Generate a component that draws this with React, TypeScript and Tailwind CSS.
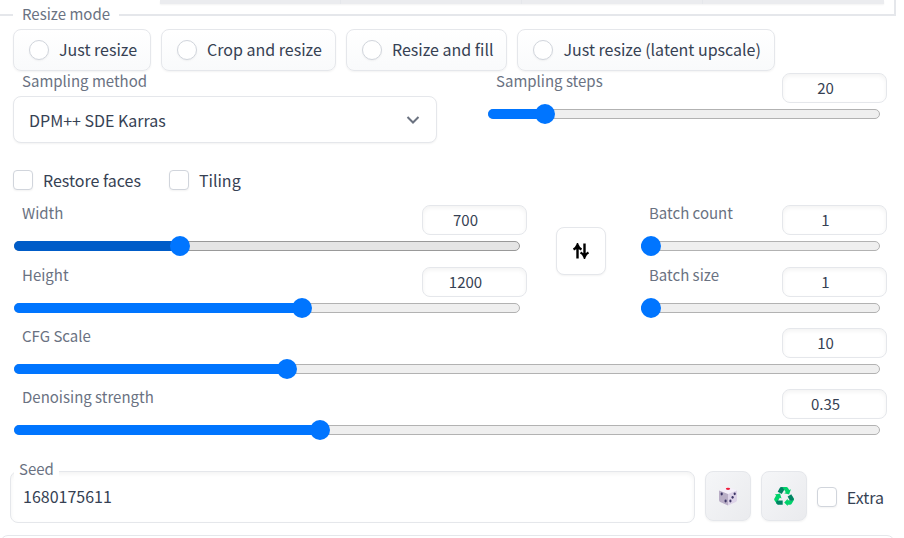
import { useId, useState } from "react";

type SliderProps = {
  label: string;
  min: number;
  max: number;
  step?: number;
  initial: number;
  active?: boolean;
};

function Slider({ label, min, max, step = 1, initial, active = false }: SliderProps) {
  const id = useId();
  const [value, setValue] = useState(initial);
  const ratio = (value - min) / (max - min);
  const update = (e: React.ChangeEvent<HTMLInputElement>) => setValue(Number(e.target.value));

  return (
    <div>
      <div className="flex items-start justify-between pl-2 text-[15px]">
        <label htmlFor={id} className="leading-4 text-gray-500">
          {label}
        </label>
        <input
          type="number"
          aria-label={label + " value"}
          min={min}
          max={max}
          step={step}
          value={value}
          onChange={update}
          className="h-[30px] w-[105px] appearance-none rounded-lg border border-gray-200 bg-white pr-[18px] pb-[2px] text-center text-gray-700 shadow-[inset_0_2px_4px_rgba(0,0,0,0.05)] outline-none [-moz-appearance:textfield] [&::-webkit-inner-spin-button]:appearance-none"
        />
      </div>
      <div className="mr-[7px] grid h-[22px] items-center">
        <span
          className={
            active
              ? "col-start-1 row-start-1 h-[10px] rounded-full border border-[#999999] bg-[#e5e5e5]"
              : "col-start-1 row-start-1 h-[10px] rounded-full border border-[#b2b2b2] bg-[#efefef]"
          }
        />
        <span
          className={
            active
              ? "col-start-1 row-start-1 h-[10px] rounded-l-full bg-[#005cc8]"
              : "col-start-1 row-start-1 h-[10px] rounded-l-full bg-[#0075ff]"
          }
          style={{ width: `calc(10px + (100% - 20px) * ${ratio})` }}
        />
        <input
          id={id}
          type="range"
          min={min}
          max={max}
          step={step}
          value={value}
          onChange={update}
          className="col-start-1 row-start-1 h-5 w-full appearance-none bg-transparent [&::-webkit-slider-thumb]:size-5 [&::-webkit-slider-thumb]:appearance-none [&::-webkit-slider-thumb]:rounded-full [&::-webkit-slider-thumb]:bg-[#0075ff]"
        />
      </div>
    </div>
  );
}

function Check({ label }: { label: string }) {
  return (
    <label className="flex items-center gap-[10px] leading-5 text-gray-700">
      <input
        type="checkbox"
        className="size-5 shrink-0 appearance-none rounded border border-gray-300 bg-white shadow-xs checked:bg-[#0075ff]"
      />
      {label}
    </label>
  );
}

function DiceIcon() {
  return (
    <svg viewBox="0 0 20 20" className="size-5" aria-hidden="true">
      <path d="M10 1 19 4.4 10 8 1 4.4Z" fill="#f5f0fa" />
      <path d="M1 4.4 10 8V19.4L2.2 16Q1 15.4 1 14Z" fill="#b9aec6" />
      <path d="M19 4.4 10 8V19.4L17.8 16Q19 15.4 19 14Z" fill="#ddd3e8" />
      <ellipse cx="10" cy="2.8" rx="2.2" ry="1.1" fill="#f01c38" />
      <g fill="#3c3466">
        <ellipse cx="3.7" cy="8" rx="1.1" ry="1.4" />
        <ellipse cx="7.6" cy="15" rx="1.1" ry="1.4" />
        <ellipse cx="16.7" cy="7.8" rx="1.1" ry="1.4" />
        <ellipse cx="14.6" cy="11.3" rx="1.1" ry="1.4" />
        <ellipse cx="12.4" cy="15" rx="1.1" ry="1.4" />
      </g>
    </svg>
  );
}

function RecycleIcon() {
  return (
    <svg viewBox="0 0 20 20" className="size-5" aria-hidden="true">
      <path d="M7.2 1h5.2q1 0 1.6 1l1.2 2 1.7-.8-1.8 5.2-5-1.2 1.7-1L9.7 2.9Z" fill="#00d26a" />
      <path d="M7.2 1q1.4-.1 2.2 1.2l.9 1.5-2.6 4.4-4-2.3L5.6 2.2Q6.2 1 7.2 1Z" fill="#008463" />
      <path d="m.8 8.5 5.2-1 1.5 5-1.7-.8-1.9 3.4 1 3.4q-1.700.2-2.5-1.200L.4 14.300q-.5-1 0-1.900l1.700-2.900Z" fill="#00d26a" />
      <path d="M3 14.4h5.7v4.3H4.5q-1.700 0-2.300-1.800Q2 15 3 14.4Z" fill="#008463" />
      <path d="m18.200 9.800 1.400 2.500q.7 1.200 0 2.300l-1.700 2.900q-.7 1.200-2 1.200h-2.200v1.200L10.200 16.500l3.500-3.700v1.500h5Z" fill="#00d26a" />
      <path d="m17.300 8.300 2.200 3.900q.8 2.300-1.600 2.500l-2.100-.3-2.200-3.900Z" fill="#008463" />
    </svg>
  );
}

const resizeModes = ["Just resize", "Crop and resize", "Resize and fill", "Just resize (latent upscale)"];

export default function App() {
  return (
    <main className="bg-white font-['Noto_Sans_CJK_SC',sans-serif] text-base">
      <div className="mr-2 h-4 border-r-2 border-b-2 border-gray-200">
        <div className="mr-[10px] ml-[160px] grid h-1 grid-cols-4 divide-x divide-gray-200 bg-[#ebecef] shadow-xs">
          <span />
          <span />
          <span />
          <span />
        </div>
      </div>

      <div className="pr-[17px] pl-[13px]">
        <fieldset className="relative -mt-3">
          <legend className="bg-white px-[9px] text-[15px] leading-5 text-gray-500">Resize mode</legend>
          <div className="mt-[5px] flex flex-wrap gap-[10px]">
            {resizeModes.map((mode) => (
              <label
                key={mode}
                className="flex h-[42px] items-center gap-[10px] rounded-lg border border-gray-200 bg-linear-to-b from-white to-gray-50 pr-[13px] pl-[15px] text-gray-700 shadow-xs"
              >
                <input
                  type="radio"
                  name="resize-mode"
                  value={mode}
                  className="size-5 shrink-0 appearance-none rounded-full border border-gray-300 bg-white shadow-xs checked:bg-[#0075ff]"
                />
                <span className="pb-[2px] leading-5">{mode}</span>
              </label>
            ))}
          </div>
        </fieldset>

        <div className="mt-[2px] grid grid-cols-[424fr_399fr] gap-[51px]">
          <div className="flex flex-col">
            <label htmlFor="sampler" className="pl-[9px] text-[15px] leading-4 text-gray-500">
              Sampling method
            </label>
            <div className="mt-[7px] grid items-center">
              <select
                id="sampler"
                className="col-start-1 row-start-1 h-[47px] w-full appearance-none rounded-lg border border-gray-200 bg-white px-[15px] text-gray-700 shadow-xs"
              >
                <option>DPM++ SDE Karras</option>
              </select>
              <svg
                viewBox="0 0 14 8"
                className="pointer-events-none col-start-1 row-start-1 mr-[17px] h-2 w-[14px] justify-self-end"
                fill="none"
                stroke="#6b7280"
                strokeWidth="2"
                aria-hidden="true"
              >
                <path d="m1.500 1 5.500 5.500L12.500 1" />
              </svg>
            </div>
          </div>
          <Slider label="Sampling steps" min={1} max={150} initial={20} />
        </div>

        <div className="mt-[27px] flex gap-7">
          <Check label="Restore faces" />
          <Check label="Tiling" />
        </div>

        <div className="mt-[15px] pl-px">
          <div className="grid grid-cols-[513fr_50px_252fr] items-center gap-[29px]">
            <div className="flex flex-col gap-[10px]">
              <Slider label="Width" min={64} max={2048} initial={700} active />
              <Slider label="Height" min={64} max={2048} initial={1200} />
            </div>
            <button
              type="button"
              aria-label="Switch width and height"
              className="mb-[22px] flex h-12 items-center justify-center rounded-lg border border-gray-200 bg-white shadow-xs"
            >
              <svg viewBox="0 0 18 16" className="h-4 w-[18px]" fill="none" stroke="#000" strokeWidth="2.4" aria-hidden="true">
                <path d="M5.500 15.500V2M1.500 6.500q3-1.500 4-4.500 1 3 4 4.500" />
                <path d="M12.500.5V14M8.500 9.500q3 1.500 4 4.500 1-3 4-4.500" />
              </svg>
            </button>
            <div className="flex flex-col gap-[10px] pl-[6px]">
              <Slider label="Batch count" min={1} max={100} initial={1} />
              <Slider label="Batch size" min={1} max={8} initial={1} />
            </div>
          </div>
          <div className="mt-[9px] flex flex-col gap-[9px]">
            <Slider label="CFG Scale" min={1} max={30} initial={10} />
            <Slider label="Denoising strength" min={0} max={1} step={0.01} initial={0.35} />
          </div>
        </div>
      </div>

      <div className="mt-[30px] flex items-start gap-[10px] pr-5 pl-[10px]">
        <div className="relative flex-1">
          <label
            htmlFor="seed"
            className="absolute -top-3 left-1 bg-white px-[5px] text-[15px] leading-5 text-gray-500"
          >
            Seed
          </label>
          <input
            id="seed"
            type="text"
            defaultValue="1680175611"
            className="block h-[52px] w-full rounded-lg border border-gray-200 bg-white px-3 pb-[2px] text-gray-700 shadow-[inset_0_2px_4px_rgba(0,0,0,0.05)] outline-none"
          />
        </div>
        <button
          type="button"
          aria-label="Random seed"
          className="flex h-[50px] w-[46px] items-center justify-center rounded-lg border border-gray-200 bg-linear-to-br from-[#f5f6f8] to-[#eaebee] shadow-xs"
        >
          <DiceIcon />
        </button>
        <button
          type="button"
          aria-label="Reuse last seed"
          className="flex h-[50px] w-[46px] items-center justify-center rounded-lg border border-gray-200 bg-linear-to-br from-[#f5f6f8] to-[#eaebee] shadow-xs"
        >
          <RecycleIcon />
        </button>
        <div className="mt-4">
          <Check label="Extra" />
        </div>
      </div>

      <div className="mt-3 mr-[9px] h-[3px] overflow-hidden">
        <div className="h-5 rounded-lg border border-gray-200" />
      </div>
    </main>
  );
}
